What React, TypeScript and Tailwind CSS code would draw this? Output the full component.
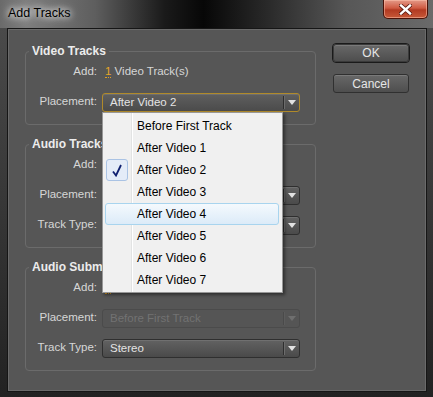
import React from 'react';

const font = "font-['Liberation_Sans',Arial,sans-serif]";

const Arrow = ({ dim }: { dim?: boolean }) => (
  <svg width="8" height="5" viewBox="0 0 8 5">
    <path d="M0 0 L8 0 L4 5 Z" fill={dim ? '#6f6f6f' : '#e2e2e2'} />
  </svg>
);

const Dropdown = ({ value, focused, disabled }: { value: string; focused?: boolean; disabled?: boolean }) => {
  const box = disabled
    ? 'border-[#4b4b4b] bg-[#555555] text-[#727272]'
    : focused
      ? 'border-[#b08a2a] bg-[linear-gradient(#5f5f5f,#4b4b4b)] text-[#e4e4e4] shadow-[inset_0_1px_0_#6e6e6e]'
      : 'border-[#2f2f2f] bg-[linear-gradient(#626262,#4a4a4a)] text-[#e4e4e4] shadow-[inset_0_1px_0_#707070]';
  return (
    <div className={`ml-[5px] flex h-[19px] w-[198px] items-center rounded-[3px] border ${box}`}>
      <span className="flex-1 truncate pl-[7px] leading-[17px]">{value}</span>
      <div className={`h-[13px] w-[1px] ${disabled ? 'bg-[#4a4a4a]' : 'bg-[#2e2e2e]'}`} />
      <div className={`h-[13px] w-[1px] ${disabled ? 'bg-[#5c5c5c]' : 'bg-[#6c6c6c]'}`} />
      <div className="flex w-[14px] items-center justify-center">
        <Arrow dim={disabled} />
      </div>
    </div>
  );
};

const Row = ({ label, children }: { label: string; children: React.ReactNode }) => (
  <div className="flex h-[28px] items-center">
    <span className="w-[71px] shrink-0 text-right text-[#d6d6d6]">{label}</span>
    {children}
  </div>
);

const AddValue = ({ count, text }: { count: string; text: string }) => (
  <span className="ml-[8px] text-[#d6d6d6]">
    <span className="border-b border-dotted border-[#e0a024] text-[#e6a626]">{count}</span> {text}
  </span>
);

const Group = ({ title, children, className = '' }: { title: string; children: React.ReactNode; className?: string }) => (
  <fieldset className={`w-[291px] rounded-[4px] border border-[#6b6b6b] pb-[8px] ${className}`}>
    <legend className="ml-[3px] px-[3px] text-[12px] font-bold leading-[14px] text-[#ececec]">{title}</legend>
    <div className="flex flex-col gap-[2px]">{children}</div>
  </fieldset>
);

const menuItems = [
  'Before First Track',
  'After Video 1',
  'After Video 2',
  'After Video 3',
  'After Video 4',
  'After Video 5',
  'After Video 6',
  'After Video 7',
];

export default function App() {
  return (
    <div className={`relative h-[397px] w-[433px] overflow-hidden bg-[#2b2b2b] text-[11.5px] ${font}`}>
      {/* glass title bar */}
      <div className="flex h-[28px] items-start justify-between bg-[linear-gradient(to_right,#6a6a6a_0%,#7e7e7e_6%,#5e5e5e_22%,#1a1a1a_38%,#070707_47%,#2a2a2a_62%,#575757_80%,#6a6a6a_100%)]">
        <span className="ml-[8px] mt-[6px] text-[12.5px] leading-[15px] text-black [text-shadow:0_0_6px_#ffffff,0_0_10px_#ffffff]">
          Add Tracks
        </span>
        <div className="mr-[5px] flex h-[19px] w-[45px] items-center justify-center rounded-b-[5px] border border-t-0 border-[#4a1208] bg-[linear-gradient(#e49a88,#cf5a42_45%,#b23a22_55%,#c65838)] shadow-[inset_0_0_0_1px_rgba(255,200,180,0.5)]">
          <svg width="13" height="11" viewBox="0 0 13 11">
            <path d="M2 1.5 L11 9.5 M11 1.5 L2 9.5" stroke="#5a1a10" strokeWidth="4" strokeLinecap="square" />
            <path d="M2 1.5 L11 9.5 M11 1.5 L2 9.5" stroke="#ffffff" strokeWidth="2.4" strokeLinecap="square" />
          </svg>
        </div>
      </div>

      {/* side glass + client area */}
      <div className="h-[369px] bg-[linear-gradient(#4a4a4a,#222222)] px-[6px] pb-[4px] pl-[7px]">
        <div className="flex h-[364px] border border-[#161616] bg-[#565656] shadow-[inset_0_0_0_1px_#6a6a6a]">
          <div className="pl-[17px] pt-[15px]">
            <Group title="Video Tracks">
              <Row label="Add:">
                <AddValue count="1" text="Video Track(s)" />
              </Row>
              <Row label="Placement:">
                <Dropdown value="After Video 2" focused />
              </Row>
            </Group>

            <Group title="Audio Tracks" className="mt-[12px]">
              <Row label="Add:">
                <AddValue count="1" text="Audio Track(s)" />
              </Row>
              <Row label="Placement:">
                <Dropdown value="After Audio 3" />
              </Row>
              <Row label="Track Type:">
                <Dropdown value="Stereo" />
              </Row>
            </Group>

            <Group title="Audio Submix Tracks" className="mt-[12px]">
              <Row label="Add:">
                <AddValue count="0" text="Audio Submix Track(s)" />
              </Row>
              <Row label="Placement:">
                <Dropdown value="Before First Track" disabled />
              </Row>
              <Row label="Track Type:">
                <Dropdown value="Stereo" />
              </Row>
            </Group>
          </div>

          <div className="ml-[16px] flex flex-col items-center pt-[14px]">
            <div className="rounded-[4px] border border-[#1a1a1a]">
              <div className="flex h-[18px] w-[76px] items-center justify-center rounded-[3px] border border-[#3a3a3a] bg-[linear-gradient(#686868,#4e4e4e)] text-[12px] text-[#e6e6e6] shadow-[inset_0_1px_0_#7a7a7a]">
                OK
              </div>
            </div>
            <div className="mt-[11px] flex h-[19px] w-[76px] items-center justify-center rounded-[3px] border border-[#303030] bg-[linear-gradient(#686868,#4e4e4e)] text-[12px] text-[#e6e6e6] shadow-[inset_0_1px_0_#7a7a7a]">
              Cancel
            </div>
          </div>
        </div>
      </div>
      <div className="h-[1px] bg-[#4fa8b8]" />

      {/* open placement menu */}
      <div className="absolute left-[102px] top-[112px] w-[181px] border border-[#979797] bg-[linear-gradient(to_right,#f0f0f0_28px,#e2e3e3_28px,#e2e3e3_29px,#ffffff_29px,#ffffff_30px,#f0f0f0_30px)] pb-[1px] pt-[2px] text-[12px] text-black shadow-[2px_2px_3px_rgba(0,0,0,0.45)]">
        {menuItems.map((item, i) => (
          <div
            key={item}
            className={`ml-[2px] mr-[3px] flex h-[22px] items-center rounded-[3px] border ${
              i === 4
                ? 'border-[#a8d4ee] bg-[linear-gradient(#f4f9fd,#dcebf8)]'
                : 'border-transparent'
            }`}
          >
            <div
              className={`flex h-[22px] w-[22px] shrink-0 items-center justify-center rounded-[3px] ${
                i === 2 ? 'border border-[#aac3e4] bg-[#e4ecf8]' : ''
              }`}
            >
              {i === 2 && (
                <svg width="10" height="13" viewBox="0 0 10 13">
                  <path d="M1 7.5 L4 11.5 L9 1" fill="none" stroke="#102070" strokeWidth="1.8" />
                </svg>
              )}
            </div>
            <span className="ml-[9px] leading-[14px]">{item}</span>
          </div>
        ))}
      </div>
    </div>
  );
}
